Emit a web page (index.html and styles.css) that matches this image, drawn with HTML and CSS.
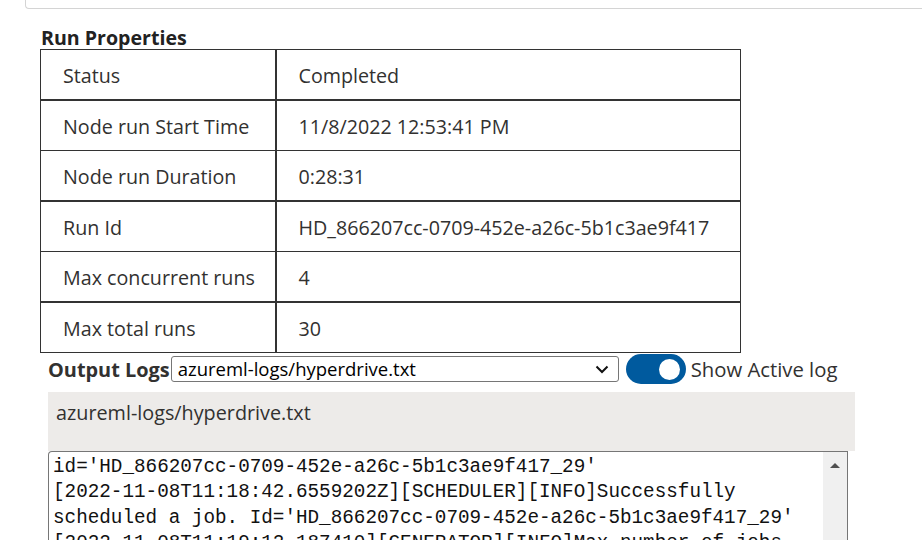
FILE: index.html
```html
<!DOCTYPE html>
<html>
<head>
<meta charset="utf-8">
<link rel="stylesheet" href="styles.css">
</head>
<body>
<div class="topbox"></div>
<div class="section">
  <h3 class="heading">Run Properties</h3>
  <table class="props">
    <tr class="r-odd"><td class="k">Status</td><td class="v">Completed</td></tr>
    <tr class="r-even"><td class="k">Node run Start Time</td><td class="v">11/8/2022 12:53:41 PM</td></tr>
    <tr class="r-odd"><td class="k">Node run Duration</td><td class="v">0:28:31</td></tr>
    <tr class="r-even"><td class="k">Run Id</td><td class="v">HD_866207cc-0709-452e-a26c-5b1c3ae9f417</td></tr>
    <tr class="r-odd"><td class="k">Max concurrent runs</td><td class="v">4</td></tr>
    <tr class="r-even"><td class="k">Max total runs</td><td class="v">30</td></tr>
  </table>
  <div class="logbar">
    <span class="loglabel">Output Logs</span>
    <div class="selectwrap">
      <div class="select">azureml-logs/hyperdrive.txt</div>
      <svg class="chev" width="14" height="9" viewBox="0 0 14 9"><path d="M1.5 1.5 L7 7 L12.5 1.5" fill="none" stroke="#111" stroke-width="2"/></svg>
    </div>
    <div class="toggle"><div class="knob"></div></div>
    <span class="toglabel">Show Active log</span>
  </div>
  <div class="filehead">azureml-logs/hyperdrive.txt</div>
  <div class="logbox">
    <pre class="logtext">[2022-11-08T11:18:42.4212233Z][SCHEDULER][INFO]Scheduling job, 
id='HD_866207cc-0709-452e-a26c-5b1c3ae9f417_29'
[2022-11-08T11:18:42.6559202Z][SCHEDULER][INFO]Successfully
scheduled a job. Id='HD_866207cc-0709-452e-a26c-5b1c3ae9f417_29'
[2022-11-08T11:19:12.187410][GENERATOR][INFO]Max number of jobs</pre>
    <div class="scrollbar"><div class="arrow"></div></div>
  </div>
</div>
</body>
</html>
```
FILE: styles.css
```css
html, body {
  margin: 0;
  padding: 0;
  background: #fff;
  height: 540px;
  overflow: hidden;
}
body {
  font-family: "Open Sans", "Noto Sans", sans-serif;
  color: #323130;
}
.topbox {
  margin-left: 25px;
  height: 8px;
  border-left: 1px solid #d4d4d4;
  border-bottom: 1px solid #d4d4d4;
  border-bottom-left-radius: 4px;
}
.section {
  padding-left: 40px;
}
.heading {
  margin: 17px 0 0 1px;
  font-size: 19.6px;
  line-height: 23px;
  font-weight: 700;
  color: #222;
}
.props {
  border-collapse: collapse;
  width: 701px;
  font-size: 19.7px;
}
.props td {
  border: 1px solid #333;
  height: 50.5px;
  padding: 2px 0 0 22px;
  box-sizing: border-box;
  vertical-align: middle;
}
.props tr.r-odd td {
  border-bottom-width: 2px;
}
.props td.k {
  width: 235px;
  border-right-width: 2px;
}
.logbar {
  display: flex;
  align-items: center;
  margin-top: 1px;
  padding-left: 8px;
  height: 30px;
}
.loglabel {
  font-size: 19.9px;
  font-weight: 700;
  color: #323130;
}
.selectwrap {
  position: relative;
  margin-left: 1px;
}
.select {
  width: 448px;
  height: 26px;
  box-sizing: border-box;
  border: 1px solid #767676;
  border-radius: 3px;
  padding-left: 6px;
  font-size: 18.5px;
  line-height: 24px;
  color: #000;
}
.chev {
  position: absolute;
  right: 10px;
  top: 9px;
}
.toggle {
  margin-left: 7px;
  width: 60px;
  height: 30px;
  border-radius: 15px;
  background: #005a9e;
  display: flex;
  align-items: center;
  justify-content: flex-end;
  padding-right: 6px;
  box-sizing: border-box;
}
.knob {
  width: 21px;
  height: 21px;
  border-radius: 50%;
  background: #fff;
}
.toglabel {
  margin-left: 5px;
  font-size: 20.3px;
  color: #323130;
}
.filehead {
  margin: 8px 0 0 8px;
  width: 807px;
  height: 59px;
  box-sizing: border-box;
  background: #edebe9;
  padding: 8px 0 0 8px;
  font-size: 19.8px;
  line-height: 26px;
  color: #323130;
}
.logbox {
  margin-left: 8px;
  width: 800px;
  height: 90px;
  box-sizing: border-box;
  border: 1px solid #767676;
  border-bottom: none;
  border-top-left-radius: 4px;
  display: flex;
  overflow: hidden;
}
.logtext {
  flex: 1;
  margin: -23px 0 0 0;
  padding-left: 4px;
  font-family: "Liberation Mono", "DejaVu Sans Mono", monospace;
  font-size: 19.3px;
  line-height: 25.5px;
  color: #111;
  white-space: pre;
  overflow: hidden;
}
.scrollbar {
  width: 24px;
  background: #f0f0f0;
  display: flex;
  justify-content: center;
  padding-top: 11px;
  box-sizing: border-box;
}
.arrow {
  width: 0;
  height: 0;
  border-left: 5px solid transparent;
  border-right: 5px solid transparent;
  border-bottom: 5px solid #505050;
}
```
